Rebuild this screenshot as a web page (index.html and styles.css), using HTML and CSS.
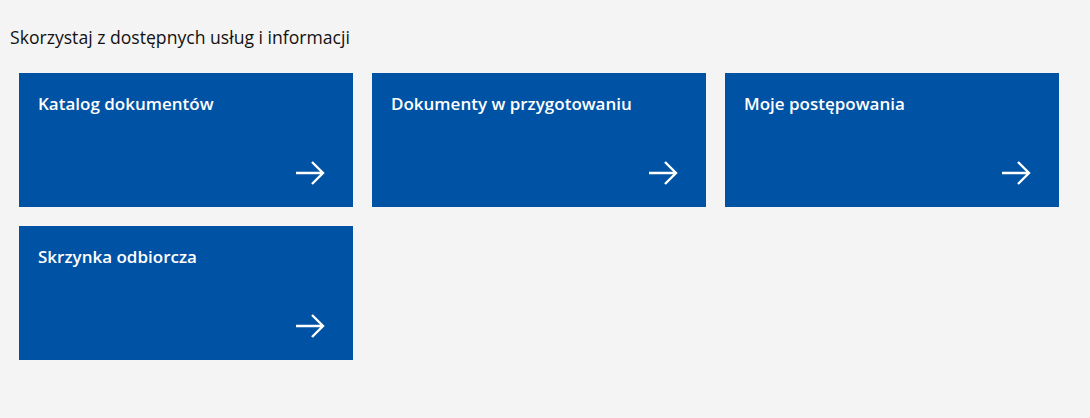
FILE: index.html
```html
<!DOCTYPE html>
<html lang="pl">
<head>
  <meta charset="UTF-8">
  <title>Usługi</title>
  <meta name="viewport" content="width=device-width, initial-scale=1.0">
  <link rel="stylesheet" href="styles.css">
</head>
<body>

  <div class="container">
    <h2 class="section-title">Skorzystaj z dostępnych usług i informacji</h2>

    <div class="tiles">
      <a class="tile" href="#">
        <span class="tile-title">Katalog dokumentów</span>
        <svg class="tile-arrow" viewBox="0 0 30 26"><path d="M1 13H28M17 2L28 13L17 24" /></svg>
      </a>
      <a class="tile" href="#">
        <span class="tile-title">Dokumenty w przygotowaniu</span>
        <svg class="tile-arrow" viewBox="0 0 30 26"><path d="M1 13H28M17 2L28 13L17 24" /></svg>
      </a>
      <a class="tile" href="#">
        <span class="tile-title">Moje postępowania</span>
        <svg class="tile-arrow" viewBox="0 0 30 26"><path d="M1 13H28M17 2L28 13L17 24" /></svg>
      </a>
      <a class="tile" href="#">
        <span class="tile-title">Skrzynka odbiorcza</span>
        <svg class="tile-arrow" viewBox="0 0 30 26"><path d="M1 13H28M17 2L28 13L17 24" /></svg>
      </a>
    </div>
  </div>

</body>
</html>
```

FILE: styles.css
```css
body {
  margin: 0;
  font-family: 'Open Sans', sans-serif;
  background-color: #f4f4f4;
}

.container {
  padding: 25px 10px 0 10px;
}

.section-title {
  margin: 0 0 24px 0;
  font-size: 17.6px;
  font-weight: 400;
  line-height: 24px;
  color: #111111;
}

.tiles {
  display: grid;
  grid-template-columns: repeat(3, 334px);
  grid-auto-rows: 134px;
  gap: 19px;
  padding-left: 9px;
}

.tile {
  display: flex;
  flex-direction: column;
  justify-content: space-between;
  background-color: #0052a5;
  color: white;
  text-decoration: none;
  padding: 19px 28px 21px 19px;
}

.tile-title {
  font-size: 17px;
  font-weight: 600;
  line-height: 24px;
}

.tile-arrow {
  align-self: flex-end;
  width: 30px;
  height: 26px;
  fill: none;
  stroke: white;
  stroke-width: 2.4;
}
```
